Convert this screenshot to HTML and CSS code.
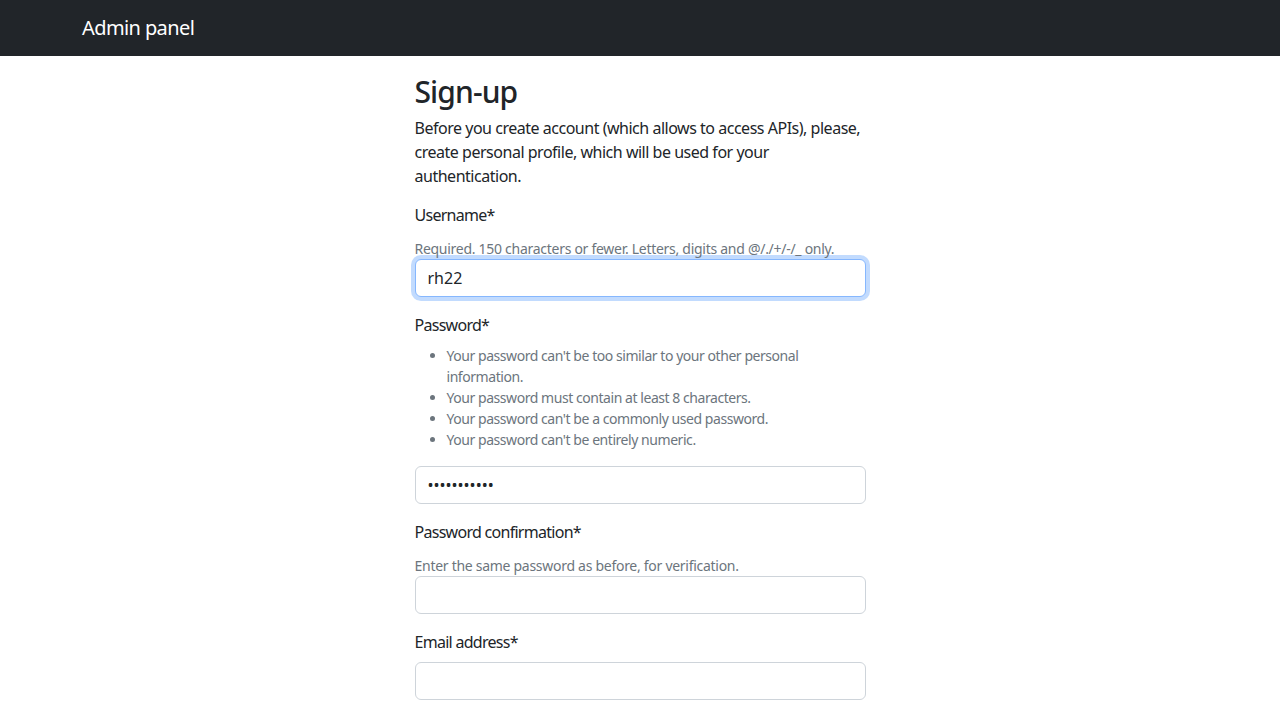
FILE: index.html
```html
<!DOCTYPE html>
<html lang="en">
<head>
<meta charset="utf-8">
<title>Sign-up</title>
<link rel="stylesheet" href="styles.css">
</head>
<body>
<nav class="navbar">
  <div class="container">
    <a class="brand" href="#">Admin panel</a>
  </div>
</nav>
<main class="container">
  <div class="row">
    <div class="col">
      <h2 class="title">Sign-up</h2>
      <p class="lead-text">Before you create account (which allows to access APIs), please, create personal profile, which will be used for your authentication.</p>
      <form class="form">
        <div class="field">
          <label class="label" for="id_username">Username*</label>
          <div class="help">Required. 150 characters or fewer. Letters, digits and @/./+/-/_ only.</div>
          <input class="input focused" type="text" id="id_username" value="rh22">
        </div>
        <div class="field">
          <label class="label" for="id_password1">Password*</label>
          <ul class="help-list">
            <li>Your password can't be too similar to your other personal information.</li>
            <li>Your password must contain at least 8 characters.</li>
            <li>Your password can't be a commonly used password.</li>
            <li>Your password can't be entirely numeric.</li>
          </ul>
          <input class="input" type="password" id="id_password1" value="abcdefghijk">
        </div>
        <div class="field">
          <label class="label" for="id_password2">Password confirmation*</label>
          <div class="help">Enter the same password as before, for verification.</div>
          <input class="input" type="password" id="id_password2">
        </div>
        <div class="field">
          <label class="label" for="id_email">Email address*</label>
          <input class="input" type="email" id="id_email">
        </div>
      </form>
    </div>
  </div>
</main>
</body>
</html>
```
FILE: styles.css
```css
* { box-sizing: border-box; }
html, body { margin: 0; padding: 0; }
body {
  font-family: "Segoe UI", "Noto Sans", "Open Sans", sans-serif;
  font-size: 16px;
  line-height: 1.5;
  letter-spacing: -0.03em;
  color: #212529;
  background: #fff;
}
.container {
  max-width: 1140px;
  margin: 0 auto;
  padding: 0 12px;
}
.navbar {
  background: #212529;
  height: 56px;
  display: flex;
  align-items: center;
}
.navbar .container { width: 100%; }
.brand {
  color: #fff;
  text-decoration: none;
  font-size: 20px;
  line-height: 30px;
  letter-spacing: -0.03em;
}
.row {
  display: flex;
  justify-content: center;
}
.col {
  width: 475px;
  padding: 0 12px;
}
.title {
  font-size: 30px;
  font-weight: 500;
  line-height: 1.2;
  letter-spacing: -0.03em;
  margin: 18px 0 6px;
}
.lead-text {
  margin: 0 0 15px;
}
.field { margin-bottom: 16px; }
.label {
  display: block;
  margin-bottom: 8px;
  letter-spacing: -0.045em;
}
.help {
  font-size: 14px;
  line-height: 21px;
  color: #6c757d;
  letter-spacing: -0.02em;
  padding-top: 3px;
}
.help-list {
  font-size: 14px;
  line-height: 21px;
  color: #6c757d;
  letter-spacing: -0.032em;
  margin: 0 0 16px;
  padding-left: 32px;
}
.input {
  display: block;
  width: 100%;
  height: 38px;
  padding: 6px 12px;
  font-family: inherit;
  font-size: 16px;
  line-height: 1.5;
  letter-spacing: 0;
  color: #212529;
  background: #fff;
  border: 1px solid #ced4da;
  border-radius: 6px;
  outline: none;
}
.input.focused {
  border-color: #86b7fe;
  box-shadow: 0 0 0 4px rgba(13, 110, 253, 0.25);
}
```
